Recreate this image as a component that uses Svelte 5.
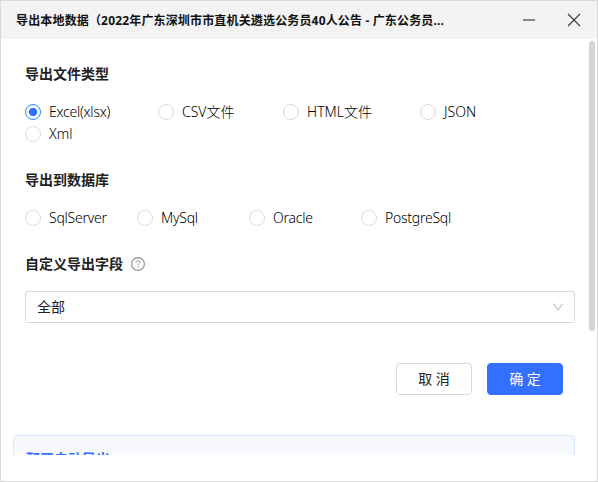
<script lang="ts">
    const fileTypes = ['Excel(xlsx)', 'CSV文件', 'HTML文件', 'JSON', 'Xml'];
    const databases = ['SqlServer', 'MySql', 'Oracle', 'PostgreSql'];

    let selected = $state('Excel(xlsx)');
</script>

<div class="window">
    <header>
        <h1>导出本地数据（2022年广东深圳市市直机关遴选公务员40人公告 - 广东公务员...</h1>
        <button class="windowButton" aria-label="最小化">
            <svg width="14" height="14" viewBox="0 0 14 14"><path d="M1 7H13" stroke="#888" stroke-width="2" /></svg>
        </button>
        <button class="windowButton" aria-label="关闭">
            <svg width="14" height="14" viewBox="0 0 14 14"><path d="M1 1L13 13M13 1L1 13" stroke="#444" stroke-width="1.3" /></svg>
        </button>
    </header>
    <main>
        <div class="form">
            <h2>导出文件类型</h2>
            <div class="radios fileTypes">
                {#each fileTypes as name}
                    <label>
                        <input type="radio" value={name} bind:group={selected} />
                        <span>{name}</span>
                    </label>
                {/each}
            </div>

            <h2 class="databaseTitle">导出到数据库</h2>
            <div class="radios databases">
                {#each databases as name}
                    <label>
                        <input type="radio" value={name} bind:group={selected} />
                        <span>{name}</span>
                    </label>
                {/each}
            </div>

            <h2 class="fieldTitle">
                自定义导出字段
                <svg width="14" height="14" viewBox="0 0 14 14" fill="none" stroke="#8c8c8c">
                    <circle cx="7" cy="7" r="6.4" stroke-width="1.1" />
                    <path d="M5.1 5.6C5.1 4.4 5.9 3.7 7 3.7S8.9 4.4 8.9 5.5C8.9 6.8 7 6.9 7 8.4" stroke-width="1" />
                    <path d="M7 9.5V10.6" stroke-width="1.1" />
                </svg>
            </h2>
            <div class="select">
                <span>全部</span>
                <svg width="12" height="12" viewBox="0 0 12 12" fill="none"><path d="M1.3 2.5L6 9L10.7 2.5" stroke="#bfbfbf" stroke-width="1.1" /></svg>
            </div>

            <div class="actions">
                <button>取 消</button>
                <button class="primary">确 定</button>
            </div>
        </div>
        <section class="auto">
            <h3>配置自动导出</h3>
        </section>
        <div class="scrollbar"></div>
    </main>
</div>

<style>
    .window{
        box-sizing: border-box;
        width: 598px;
        height: 482px;
        border: 1px solid #d9d9d9;
        background: #fff;
        color: #222;
        font-family: "Noto Sans", "Noto Sans CJK SC", sans-serif;
        font-size: 14px;
    }

    header{
        display: flex;
        align-items: center;
        height: 38px;
        padding: 0 16px 0 15px;
        background: #f3f3f3;
    }

    h1{
        flex: 1;
        margin: 0;
        padding-top: 1px;
        font-size: 12px;
        line-height: 20px;
        letter-spacing: 0.16px;
        white-space: nowrap;
        color: #111;
    }

    .windowButton{
        display: flex;
        margin-left: 31px;
        padding: 0;
        border: 0;
        background: none;
    }

    main{
        position: relative;
        height: 416px;
        overflow: hidden;
    }

    .form{
        padding: 24px 22px 0 24px;
    }

    h2{
        display: flex;
        align-items: center;
        height: 22px;
        margin: 0;
        font-size: 14px;
        line-height: 22px;
    }

    .radios{
        display: grid;
        margin-top: 16px;
    }

    .fileTypes{
        grid-template-columns: 133px 125px 137px 1fr;
    }

    .databases{
        grid-template-columns: repeat(4, 112px);
    }

    label{
        display: flex;
        align-items: center;
        gap: 8px;
        height: 22px;
        line-height: 22px;
        white-space: nowrap;
        font-weight: 300;
        color: #000;
    }

    .databases label, .fileTypes label:first-child{
        letter-spacing: -0.25px;
    }

    input{
        box-sizing: border-box;
        appearance: none;
        flex: none;
        width: 16px;
        height: 16px;
        margin: 0;
        border: 1px solid #d9d9d9;
        border-radius: 50%;
        background: #fff;
    }

    input:checked{
        border-color: #1890ff;
        background: radial-gradient(circle, #3370ff 3.8px, transparent 4.4px);
    }

    .databaseTitle{
        margin-top: 24px;
    }

    .fieldTitle{
        gap: 8px;
        margin-top: 24px;
    }

    .select{
        box-sizing: border-box;
        display: flex;
        align-items: center;
        justify-content: space-between;
        height: 32px;
        margin-top: 16px;
        padding: 0 10px 0 11px;
        border: 1px solid #d9d9d9;
        border-radius: 2px;
    }

    .select span{
        padding-bottom: 2px;
    }

    .actions{
        display: flex;
        justify-content: flex-end;
        gap: 15px;
        margin-top: 40px;
        padding-right: 12px;
    }

    .actions button{
        box-sizing: border-box;
        width: 76px;
        height: 32px;
        padding: 0;
        border: 1px solid #d9d9d9;
        border-radius: 4px;
        background: #fff;
        color: #222;
        font: inherit;
        line-height: 22px;
    }

    .actions .primary{
        border-color: #3370ff;
        background: #3370ff;
        color: #fff;
    }

    .auto{
        height: 100px;
        margin: 40px 22px 0 12px;
        padding: 12px;
        border: 1px solid #d6e7fd;
        border-radius: 4px;
        background: #f7f9ff;
    }

    h3{
        margin: 0;
        font-size: 14px;
        line-height: 22px;
        color: #3370ff;
    }

    .scrollbar{
        position: absolute;
        top: 2px;
        right: 2px;
        width: 6px;
        height: 290px;
        border-radius: 3px;
        background: #d4d4d4;
    }
</style>
